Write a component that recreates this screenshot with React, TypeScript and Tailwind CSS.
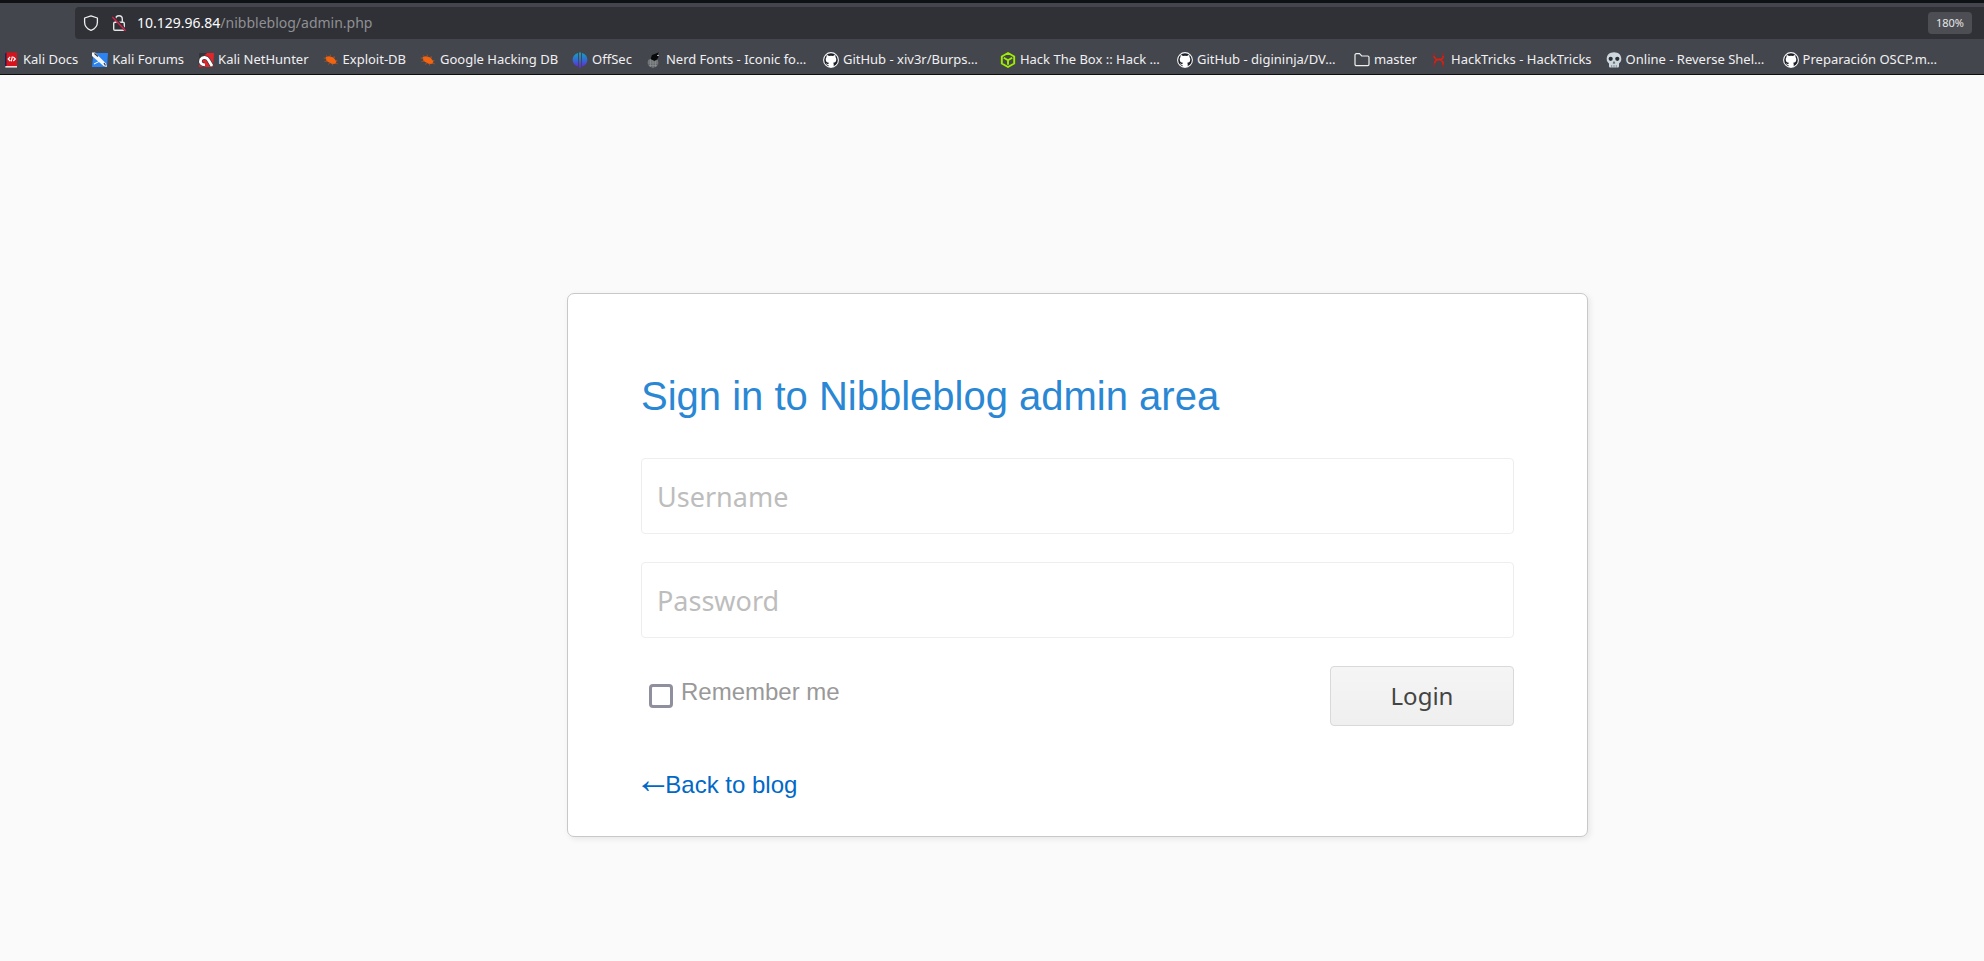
import type { ReactNode } from "react";

const Shield = () => (
  <svg viewBox="0 0 16 16" className="size-4" fill="none" stroke="#f0f0f0" strokeWidth="1.3" strokeLinejoin="round" aria-hidden="true">
    <path d="M8 .9 14.4 3v4.2c0 3.6-2.6 6.6-6.4 8.1C4.200 13.800 1.600 10.800 1.600 7.200V3z" />
  </svg>
);

const BrokenLock = () => (
  <svg viewBox="0 0 16 16" className="size-4" fill="none" strokeWidth="1.4" aria-hidden="true">
    <rect x="2.700" y="7.200" width="10.600" height="8" rx="1.200" stroke="#e4e4e4" />
    <path d="M4.700 7V4a3.300 3.300 0 0 1 6.600 0v3" stroke="#e4e4e4" />
    <path d="M2.300 2 15 15.600" stroke="#303136" strokeWidth="2.600" />
    <path d="M1.300 2 14.600 15.700" stroke="#e0224e" />
  </svg>
);

const Docs = () => (
  <svg viewBox="0 0 16 16" className="size-4" aria-hidden="true">
    <path d="M2 1.500 4 .4v14L2 15.500z" fill="#1b2350" />
    <path d="M3.500.4H14V14H3.500z" fill="#d8131b" />
    <path d="M2.300 14H14v1.600H2.300z" fill="#e9dcdc" />
    <path d="m7.200 4.800-2 2.200 2 2M10.300 4.800l2 2.200-2 2M8.200 9.300l1.200-4.800" stroke="#fff" strokeWidth="1.200" fill="none" />
  </svg>
);

const Forums = () => (
  <svg viewBox="0 0 16 16" className="size-4" aria-hidden="true">
    <path d="M1.500 1H16l-1 14H0z" fill="#2b84f2" />
    <path d="m0 .5 3 0 11 11 1 3.500-3.500-1L0 4z" fill="#f3f6fa" />
    <path d="m2.500 1.500 3.500 3M12 11l1.500 2.500" stroke="#30343c" strokeWidth="1.200" />
    <path d="m2 12 5-2.500" stroke="#fff" />
  </svg>
);

const NetHunter = () => (
  <svg viewBox="0 0 16 16" className="size-4" aria-hidden="true">
    <path d="M2 1h14l-1 14H1z" fill="#e3252b" />
    <path d="M1 1h8L1 8z" fill="#34343a" />
    <path d="m14 14-3.500-6C9 5 4.500 4.500 2.800 7.500c-1.300 3 .7 5.300 4.200 5.300" fill="none" stroke="#35343a" strokeWidth="4.200" />
    <path d="m14 14-3.500-6C9 5 4.500 4.500 2.800 7.500c-1.300 3 .7 5.300 4.200 5.300" fill="none" stroke="#fff" strokeWidth="2.800" />
  </svg>
);

const Bug = () => (
  <svg viewBox="0 0 16 16" className="size-4" fill="#f2640f" aria-hidden="true">
    <path d="M2.500 5 6 4.200l4.500 1.300 3 4-1 2.300-3.500.2-5.500-3z" />
    <path d="m3 3.500 2 1.500M7 2.500l.7 2M11 4l.5 2M.500 6l3 .7M1.500 9.500l3-.5M5 12.500l2-1.500M9.500 13.500v-2M14.500 8.500l-2 0M15 12l-2.500-1" stroke="#b4551f" strokeWidth=".7" />
  </svg>
);

const OffSec = () => (
  <svg viewBox="0 0 16 16" className="size-4" fill="url(#offsec)" aria-hidden="true">
    <defs>
      <linearGradient id="offsec" x1="0" y1="0" x2="0" y2="16" gradientUnits="userSpaceOnUse">
        <stop offset="0" stopColor="#12a5bd" />
        <stop offset=".5" stopColor="#326bd2" />
        <stop offset="1" stopColor="#6a22d8" />
      </linearGradient>
    </defs>
    <path d="M6 1v13.500C2.700 13.500.6 11 .6 7.800S2.700 2 6 1zM10 1v13.500c3.300-1 5.400-3.500 5.400-6.700S13.300 2 10 1zM7 .5h2V16H7z" />
  </svg>
);

const Nerd = () => (
  <svg viewBox="0 0 16 16" className="size-4" aria-hidden="true">
    <ellipse cx="7" cy="10.700" rx="5.500" ry="5" fill="#64676b" />
    <path d="M2 9h10M2 11h10M3 13.500h8M4.500 7v8M7 6.500V16M9.500 7v8" stroke="#8e9194" strokeWidth=".7" />
    <path d="M4.500 7 6 3l4-1.500L13 .3l-1.200 2 .7 2.700L11 7.500 8.500 9z" fill="#08090b" />
    <path d="M11 3.500h2" stroke="#aaa" />
  </svg>
);

const GitHub = () => (
  <svg viewBox="0 0 16 16" className="size-4" aria-hidden="true">
    <circle cx="8" cy="8" r="7.400" fill="#1c2028" stroke="#f5f5f5" strokeWidth="1.100" />
    <path
      fill="#fff"
      d="M3.700 3.100c.9 0 1.600.4 2.200.9a8 8 0 0 1 4.200 0c.6-.5 1.300-.9 2.200-.9.300.8.300 1.400.1 2 .6.700.9 1.400.9 2.300 0 2.300-1.400 3.100-3.100 3.400.4.400.5.900.5 1.500V15H5.500v-2.100c-1.600.3-2.100-.7-2.600-1.400.9 0 1.300 1 2.600.6 0-.5.200-.9.400-1.300-1.700-.3-3.200-1.100-3.200-3.400 0-.9.300-1.600.9-2.300-.2-.6-.2-1.200.1-2z"
    />
  </svg>
);

const Cube = () => (
  <svg viewBox="0 0 16 16" className="size-4" fill="none" stroke="#9fef00" strokeWidth="1.900" strokeLinejoin="round" aria-hidden="true">
    <path d="m8 1 6.200 3.500v7L8 15l-6.200-3.500v-7z" />
    <path d="m3.800 5.700 4.200 2.500 4.200-2.500M8 8.200v4.500" />
  </svg>
);

const Folder = () => (
  <svg viewBox="0 0 16 16" className="size-4" fill="none" stroke="#f0f0f0" strokeWidth="1.200" aria-hidden="true">
    <path d="M1 3a1.300 1.300 0 0 1 1.300-1.300h3.200L7.700 4h6a1.300 1.300 0 0 1 1.300 1.300v7a1.300 1.300 0 0 1-1.300 1.300H2.300A1.300 1.300 0 0 1 1 12.300z" />
  </svg>
);

const Tricks = () => (
  <svg viewBox="0 0 16 16" className="size-4" fill="none" stroke="#e61d0d" strokeWidth="1.500" aria-hidden="true">
    <path d="M3 4v1l2.500 2.500H9c-3 0-5.300 1.500-5.500 4" />
    <path d="M12.200 4c0 2-1.200 3.500-3.200 3.500L12 10v3" />
    <path d="M3 1v3M3.200 11v3.500M12.200 1v3M12 12.500V15" stroke="#a02526" />
  </svg>
);

const Skull = () => (
  <svg viewBox="0 0 16 16" className="size-4" aria-hidden="true">
    <path d="M8 .3c4.500 0 7.300 2.800 7.300 6.500 0 2.500-.8 3.600-2.300 4.600v2.700c0 1-.6 1.500-1.500 1.500h-7c-.9 0-1.500-.5-1.500-1.500v-2.700C1.500 10.400.7 9.300.7 6.800.7 3.100 3.500.3 8 .3z" fill="#ccd6dd" />
    <circle cx="4.700" cy="6.800" r="2.100" fill="#292f33" />
    <circle cx="11.300" cy="6.800" r="2.100" fill="#292f33" />
    <path d="m8 9.500 1 1.700H7zM5.700 13v3M8 13v3M10.300 13v3" fill="#292f33" stroke="#66757f" strokeWidth=".7" />
  </svg>
);

type Bookmark = { label: string; icon: ReactNode; clipped?: boolean };

const bookmarks: Bookmark[] = [
  { label: "Kali Docs", icon: <Docs /> },
  { label: "Kali Forums", icon: <Forums /> },
  { label: "Kali NetHunter", icon: <NetHunter /> },
  { label: "Exploit-DB", icon: <Bug /> },
  { label: "Google Hacking DB", icon: <Bug /> },
  { label: "OffSec", icon: <OffSec /> },
  { label: "Nerd Fonts - Iconic fo…", icon: <Nerd />, clipped: true },
  { label: "GitHub - xiv3r/Burps…", icon: <GitHub />, clipped: true },
  { label: "Hack The Box :: Hack …", icon: <Cube />, clipped: true },
  { label: "GitHub - digininja/DV…", icon: <GitHub />, clipped: true },
  { label: "master", icon: <Folder /> },
  { label: "HackTricks - HackTricks", icon: <Tricks /> },
  { label: "Online - Reverse Shel…", icon: <Skull />, clipped: true },
  { label: "Preparación OSCP.m…", icon: <GitHub />, clipped: true },
];

const fieldClass =
  "h-[76px] w-full rounded-[4px] border border-[#eeeeee] bg-white px-[15px] text-[27px] text-[#444444] outline-none placeholder:text-[#bdbdbd] font-['Noto_Sans',sans-serif]";

export default function App() {
  return (
    <div className="flex min-h-screen flex-col bg-[#fafafa] font-['Liberation_Sans',sans-serif]">
      <header className="overflow-hidden border-t-[3px] border-b border-t-[#101114] border-b-[#0c0c0d] bg-[#44464d] pt-1 font-['Noto_Sans',sans-serif]">
        <div className="ml-[75px] flex h-8 items-center rounded-l-[4px] bg-[#303136] pr-3 pl-2">
          <Shield />
          <span className="ml-3">
            <BrokenLock />
          </span>
          <p className="ml-[10px] flex-1 pb-[2px] text-[14px] text-[#8f9094]">
            <span className="text-[#fbfbfe]">10.129.96.84</span>/nibbleblog/admin.php
          </p>
          <button type="button" className="h-[22px] rounded-[4px] bg-[#4d4e53] px-2 text-[11px] text-[#e6e6e8]">
            180%
          </button>
        </div>
        <nav className="flex h-[35px] items-center gap-[14px] pt-[6px] pl-[3px] text-[13px] whitespace-nowrap text-[#f0f0f2]" aria-label="Bookmarks">
          {bookmarks.map(({ label, icon, clipped }) => (
            <a key={label} href="#" className="flex shrink-0 items-center gap-1">
              <span className="size-4">{icon}</span>
              <span className={clipped ? "w-[143px]" : ""}>{label}</span>
            </a>
          ))}
        </nav>
      </header>

      <main className="flex flex-1 justify-center pt-[218px] pl-[171px]">
        <form
          className="w-full max-w-[1021px] self-start rounded-[7px] border border-[#c8c8c8] bg-white px-[73px] pt-[76px] pb-9 shadow-[2px_2px_6px_rgba(0,0,0,0.08)]"
          onSubmit={(event) => event.preventDefault()}
        >
          <h1 className="text-[40px] leading-[52px] text-[#2a87d4]">Sign in to Nibbleblog admin area</h1>
          <div className="mt-9 flex flex-col gap-7">
            <input type="text" aria-label="Username" placeholder="Username" className={fieldClass} />
            <input type="password" aria-label="Password" placeholder="Password" className={fieldClass} />
          </div>
          <div className="mt-7 flex items-start justify-between">
            <div className="flex items-start gap-2 pt-3 pl-2">
              <input
                id="remember"
                type="checkbox"
                className="mt-[6px] size-6 appearance-none rounded-[4px] border-3 border-[#8f8f9d] bg-white checked:bg-[#0060df]"
              />
              <label htmlFor="remember" className="text-[24px] leading-7 text-[#999999]">
                Remember me
              </label>
            </div>
            <button
              type="submit"
              className="h-[60px] w-[184px] rounded-[4px] border border-[#d9d9d9] bg-linear-to-b from-[#f5f5f5] to-[#efefef] font-['Noto_Sans',sans-serif] text-[24px] text-[#444444]"
            >
              Login
            </button>
          </div>
          <a href="#" className="mt-11 flex w-fit items-center text-[24px] leading-[30px] text-[#0069c8]">
            <span className="font-['Noto_Sans_Math','Inter',sans-serif]">←</span>
            <span>Back to blog</span>
          </a>
        </form>
      </main>
    </div>
  );
}
